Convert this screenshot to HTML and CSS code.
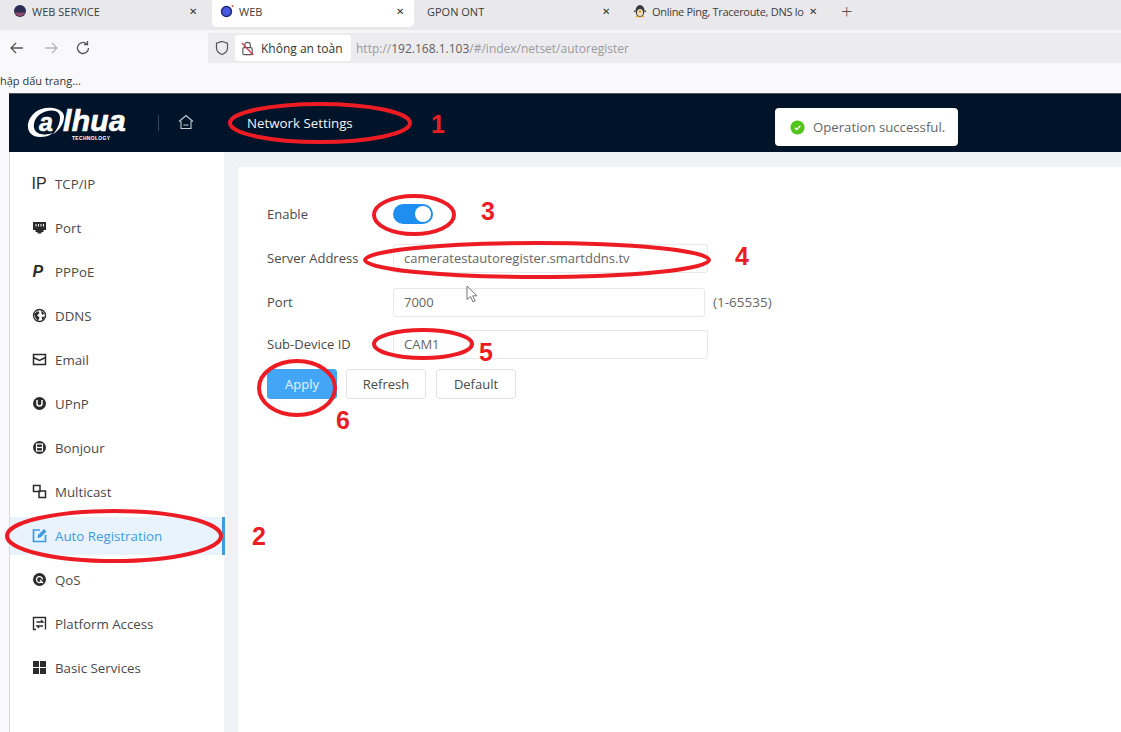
FILE: index.html
```html
<!DOCTYPE html>
<html lang="en">
<head>
    <meta charset="UTF-8">
    <title>WEB</title>
    <link rel="stylesheet" href="styles.css">
</head>
<body>

<!-- Browser tabs -->
<div class="tabs">
    <div class="tab tab-first">
        <svg class="favicon" viewBox="0 0 14 14"><circle cx="7" cy="7" r="6" fill="#2b2d52"/><path d="M1.5 8.5a6 6 0 0 0 11 0z" fill="#8a4a6a"/></svg>
        <span class="tab-title">WEB SERVICE</span>
        <span class="tab-close">✕</span>
    </div>
    <div class="tab tab-active">
        <svg class="favicon" viewBox="0 0 14 14"><circle cx="6.5" cy="7.500" r="5" fill="#4a58e0" stroke="#1f2a70" stroke-width="1.400"/><circle cx="12.500" cy="2" r="1" fill="#e0503a"/></svg>
        <span class="tab-title">WEB</span>
        <span class="tab-close">✕</span>
    </div>
    <div class="tab tab-third">
        <span class="tab-title">GPON ONT</span>
        <span class="tab-close">✕</span>
    </div>
    <div class="tab tab-fourth">
        <svg class="favicon" viewBox="0 0 14 14"><ellipse cx="7" cy="7" rx="4.500" ry="6" fill="#3a3a3a"/><ellipse cx="7" cy="8.500" rx="3" ry="3.500" fill="#f3e6c8"/><circle cx="7" cy="7.500" r="1.200" fill="#d98a1c"/><path d="M3 12.500h3M8 12.500h3" stroke="#e8a020" stroke-width="1.500"/><path d="M2.500 6L1 8M11.500 6L13 8" stroke="#3a3a3a"/></svg>
        <span class="tab-title">Online Ping, Traceroute, DNS lo</span>
        <span class="tab-close">✕</span>
    </div>
    <span class="tab-new">+</span>
</div>

<!-- Address bar -->
<div class="toolbar">
    <svg class="nav-icon" viewBox="0 0 16 16"><path d="M14 8H2.500M7 3L2 8l5 5" fill="none" stroke="#555" stroke-width="1.300"/></svg>
    <svg class="nav-icon nav-off" viewBox="0 0 16 16"><path d="M2 8h11.500M9 3l5 5-5 5" fill="none" stroke="#b5b5b8" stroke-width="1.300"/></svg>
    <svg class="nav-icon" viewBox="0 0 16 16"><path d="M13.500 8a5.500 5.500 0 1 1-1.700-4M12.500 1v3.500H9" fill="none" stroke="#555" stroke-width="1.300"/></svg>
    <div class="urlbar">
        <svg class="shield" viewBox="0 0 16 16"><path d="M8 1.500l5.500 1.800V8c0 3.200-2.500 5.400-5.500 6.500C5 13.400 2.500 11.200 2.500 8V3.300z" fill="none" stroke="#555" stroke-width="1.200"/></svg>
        <div class="site-pill">
            <svg class="lock" viewBox="0 0 16 16"><rect x="3" y="7" width="10" height="7.500" rx="1.500" fill="none" stroke="#555" stroke-width="1.200"/><path d="M5 7V4.500a3 3 0 0 1 6 0V7" fill="none" stroke="#555" stroke-width="1.200"/><path d="M2 2l12 13" stroke="#d8344a" stroke-width="1.400"/></svg>
            <span>Không an toàn</span>
        </div>
        <span class="url">http://<b>192.168.1.103</b>/#/index/netset/autoregister</span>
    </div>
</div>

<div class="bookmarks">hập dấu trang...</div>

<!-- Camera web UI -->
<div class="app">
    <header class="app-header">
        <div class="logo">
            <svg class="logo-swoosh" viewBox="0 0 44 32"><path d="M26 1C14-1 3 6 1 17c-1 8 4 13 12 13 5 0 9-1 13-4-4 1.500-8 2-12 1-5-1-8-5-7-10C8 9 16 3.500 25 3.500c5 0 8 3 8 7 0 6-3 12-7 17 7-5 11-11 11-18 0-4-4-7.500-11-8.500z" fill="#fff"/></svg>
            <span class="logo-a">a</span><span class="logo-rest">lhua</span>
            <span class="logo-sub">TECHNOLOGY</span>
        </div>
        <span class="header-divider"></span>
        <svg class="home-icon" viewBox="0 0 16 16"><path d="M1 7.500L8 1.500l7 6M3 7v7.500h10V7M5.500 11h5" fill="none" stroke="#c8ced6" stroke-width="1.100"/></svg>
        <span class="header-title">Network Settings</span>
    </header>

    <div class="layout">
        <nav class="sidebar">
            <a class="nav-item">
                <svg class="nav-glyph" viewBox="0 0 15 15"><text x="-0.500" y="13" class="glyph-ip">IP</text></svg>
                TCP/IP
            </a>
            <a class="nav-item">
                <svg class="nav-glyph" viewBox="0 0 15 15"><path d="M1 2h13v8h-2.500v2h-2v1.500h-4V12h-2v-2H1z" fill="#2b2b2b"/><path d="M4 4v2.500M6.500 4v2.500M9 4v2.500M11.500 4v2.500" stroke="#fff"/></svg>
                Port
            </a>
            <a class="nav-item">
                <svg class="nav-glyph" viewBox="0 0 15 15"><text x="0.500" y="13" class="glyph-p">P</text></svg>
                PPPoE
            </a>
            <a class="nav-item">
                <svg class="nav-glyph" viewBox="0 0 15 15"><circle cx="7.500" cy="7.500" r="6" fill="none" stroke="#2b2b2b" stroke-width="1.300"/><path d="M2 6l4-3 1.500 2L5 7.500l2.500 2L6 13 3.500 10zM9 2.500l3.500 3L10 7zM9.500 9l3.500-.5-2.500 4z" fill="#2b2b2b"/></svg>
                DDNS
            </a>
            <a class="nav-item">
                <svg class="nav-glyph" viewBox="0 0 15 15"><path d="M1.500 2.500h12v10h-12zM1.500 5.500l6 3 6-3" fill="none" stroke="#2b2b2b" stroke-width="1.500"/></svg>
                Email
            </a>
            <a class="nav-item">
                <svg class="nav-glyph" viewBox="0 0 15 15"><circle cx="7.500" cy="7.500" r="6.500" fill="#2b2b2b"/><path d="M5 4v3.500a2.500 2.500 0 0 0 5 0V4" fill="none" stroke="#fff" stroke-width="1.500"/></svg>
                UPnP
            </a>
            <a class="nav-item">
                <svg class="nav-glyph" viewBox="0 0 15 15"><circle cx="7.500" cy="7.500" r="6.500" fill="#2b2b2b"/><rect x="4.500" y="4" width="6" height="7" fill="none" stroke="#fff" stroke-width="1.200"/><path d="M4.500 7.500h6" stroke="#fff" stroke-width="1.200"/></svg>
                Bonjour
            </a>
            <a class="nav-item">
                <svg class="nav-glyph" viewBox="0 0 15 15"><path d="M1.500 1.500h6.500v6H1.500zM7 7h6.500v6.500H7z" fill="none" stroke="#2b2b2b" stroke-width="1.500"/></svg>
                Multicast
            </a>
            <a class="nav-item nav-active">
                <svg class="nav-glyph" viewBox="0 0 15 15"><path d="M8 2H1.500v11.500h12V7" fill="none" stroke="#3f9be0" stroke-width="1.700"/><path d="M5.500 10l.5-3 6-6 2.500 2.500-6 6z" fill="#3f9be0"/></svg>
                Auto Registration
            </a>
            <a class="nav-item">
                <svg class="nav-glyph" viewBox="0 0 15 15"><circle cx="7.500" cy="7.500" r="6.500" fill="#2b2b2b"/><path d="M10.500 7.500a3 3 0 1 0-1 2.300M8 8l3 3" fill="none" stroke="#fff" stroke-width="1.300"/></svg>
                QoS
            </a>
            <a class="nav-item">
                <svg class="nav-glyph" viewBox="0 0 15 15"><path d="M4 13.500H1.500v-12h12v12" fill="none" stroke="#2b2b2b" stroke-width="1.400"/><path d="M4.500 6h6.500L9 4M11 10H5l2 2" fill="none" stroke="#2b2b2b" stroke-width="1.300"/></svg>
                Platform Access
            </a>
            <a class="nav-item">
                <svg class="nav-glyph" viewBox="0 0 15 15"><path d="M1 1h6v6H1zM8 1h6v6H8zM1 8h6v6H1zM8 8h6v6H8z" fill="#2b2b2b"/></svg>
                Basic Services
            </a>
        </nav>

        <main class="content">
            <div class="form-row">
                <label class="form-label">Enable</label>
                <span class="switch"><span class="switch-knob"></span></span>
            </div>
            <div class="form-row">
                <label class="form-label">Server Address</label>
                <div class="field">cameratestautoregister.smartddns.tv</div>
            </div>
            <div class="form-row">
                <label class="form-label">Port</label>
                <div class="field field-short">7000</div>
                <span class="hint">(1-65535)</span>
            </div>
            <div class="form-row">
                <label class="form-label">Sub-Device ID</label>
                <div class="field">CAM1</div>
            </div>
            <div class="actions">
                <button class="btn btn-primary">Apply</button>
                <button class="btn">Refresh</button>
                <button class="btn">Default</button>
            </div>
        </main>
    </div>
</div>

<!-- Toast on top of the header -->
<div class="toast">
    <svg class="toast-icon" viewBox="0 0 16 16"><circle cx="8" cy="8" r="7.500" fill="#52c41a"/><path d="M5 8.200l2.200 2.100L11 6.200" fill="none" stroke="#fff" stroke-width="1.400"/></svg>
    Operation successful.
</div>

<!-- Mouse pointer -->
<svg class="pointer" viewBox="0 0 12 18"><path d="M1 1v13.500l3.500-3 2.500 5.500 2.200-1-2.500-5.200H11z" fill="#fff" stroke="#777"/></svg>

<!-- Red marks drawn over the screenshot -->
<svg class="marks" viewBox="0 0 1121 732">
    <ellipse cx="320" cy="123" rx="90" ry="19"/>
    <ellipse cx="114" cy="536" rx="107" ry="25"/>
    <ellipse cx="414" cy="215" rx="40" ry="19"/>
    <ellipse cx="537" cy="260" rx="172" ry="17"/>
    <ellipse cx="423" cy="344" rx="49" ry="14"/>
    <ellipse cx="297" cy="388" rx="38" ry="27"/>
    <text x="438" y="133">1</text>
    <text x="259" y="545">2</text>
    <text x="488" y="220">3</text>
    <text x="742" y="265">4</text>
    <text x="486" y="361">5</text>
    <text x="343" y="429">6</text>
</svg>

</body>
</html>
```

FILE: styles.css
```css
/* Basic reset */
* {
    box-sizing: border-box;
    margin: 0;
    padding: 0;
}

:root {
    --header-color: #001429;
    --text-color: #4a4a4a;
    --page-grey: #f1f2f5;
    --blue: #3f9be0;
    --red: #ed1c24;
}

body {
    font-family: 'Open Sans', sans-serif;
    background-color: #f9f9fb;
    color: var(--text-color);
    height: 100vh;
    overflow: hidden;
    position: relative;
}

/* Browser tabs */
.tabs {
    display: flex;
    align-items: flex-start;
    height: 33px;
    background-color: #e9e9eb;
    border-bottom: 3px solid #f6f6f8;
    font-size: 11px;
    color: #3c3c3c;
}

.tab {
    display: flex;
    align-items: center;
    height: 22px;
}

.tab-first {
    width: 212px;
    padding: 0 11px 0 13px;
}

.tab-active {
    width: 202px;
    height: 27px;
    padding: 0 6px 5px 8px;
    background-color: #fff;
    border-radius: 0 0 5px 5px;
}

.tab-third {
    width: 212px;
    padding: 0 12px 0 13px;
}

.tab-fourth {
    width: 195px;
    padding: 0 0 0 7px;
}

.favicon {
    width: 14px;
    height: 14px;
    margin-right: 5px;
    flex-shrink: 0;
}

.tab-title {
    flex: 1;
    white-space: nowrap;
    overflow: hidden;
}

.tab-close {
    font-size: 10px;
    color: #333;
    width: 16px;
    text-align: center;
}

.tab-fourth .tab-title {
    letter-spacing: -0.3px;
}

.tab-new {
    font-size: 20px;
    line-height: 24px;
    font-weight: 300;
    color: #555;
    margin-left: 20px;
}

/* Address bar */
.toolbar {
    display: flex;
    align-items: center;
    height: 30px;
    padding-left: 9px;
}

.nav-icon {
    width: 16px;
    height: 16px;
    margin-right: 18px;
}

.nav-off {
    margin-right: 16px;
}

.urlbar {
    display: flex;
    align-items: center;
    flex: 1;
    height: 30px;
    margin-left: 99px;
    padding-left: 6px;
    background-color: #ececee;
    font-size: 12px;
}

.shield {
    width: 16px;
    height: 16px;
    margin-right: 5px;
}

.site-pill {
    display: flex;
    align-items: center;
    height: 26px;
    width: 116px;
    padding-left: 5px;
    background-color: #fff;
    border-radius: 3px;
    color: #333;
    white-space: nowrap;
}

.lock {
    width: 15px;
    height: 15px;
    margin-right: 6px;
}

.url {
    margin-left: 5px;
    color: #9a9a9e;
    white-space: nowrap;
}

.url b {
    font-weight: 400;
    color: #5f5f63;
}

.bookmarks {
    height: 30px;
    line-height: 35px;
    font-size: 11px;
    color: #333;
    white-space: nowrap;
}

/* Camera web UI */
.app {
    margin-left: 9px;
    border-left: 1px solid #d8dade;
    height: 640px;
}

.app-header {
    display: flex;
    align-items: center;
    height: 59px;
    margin-left: -1px;
    padding-left: 18px;
    background-color: var(--header-color);
    border-top: 1px solid #555;
}

.logo {
    position: relative;
    width: 112px;
    height: 40px;
    color: #fff;
    font-family: 'Liberation Sans', sans-serif;
    font-style: italic;
    font-weight: 700;
}

.logo-swoosh {
    position: absolute;
    left: 0;
    top: 4px;
    width: 44px;
    height: 32px;
}

.logo-a {
    position: absolute;
    left: 12px;
    top: 5px;
    font-size: 25px;
    -webkit-text-stroke: 0.5px #fff;
}

.logo-rest {
    position: absolute;
    left: 36px;
    top: 5px;
    font-size: 30px;
    line-height: 26px;
    letter-spacing: 0.3px;
    -webkit-text-stroke: 0.7px #fff;
}

.logo-sub {
    position: absolute;
    left: 45px;
    top: 32px;
    font-size: 5px;
    line-height: 6px;
    font-style: normal;
    letter-spacing: 0.3px;
}

.header-divider {
    width: 1px;
    height: 16px;
    margin-left: 19px;
    background-color: #33465a;
}

.home-icon {
    width: 16px;
    height: 16px;
    margin-left: 19px;
    margin-bottom: 2px;
}

.header-title {
    margin-left: 53px;
    font-size: 13.300px;
    color: #f2f4f6;
}

.layout {
    display: flex;
    height: 580px;
    background-color: var(--page-grey);
}

.sidebar {
    width: 214px;
    padding-top: 13px;
    background-color: #fff;
    flex-shrink: 0;
}

.nav-item {
    display: flex;
    align-items: center;
    height: 38px;
    margin-bottom: 6px;
    padding-left: 22px;
    font-size: 13.300px;
    white-space: nowrap;
    color: var(--text-color);
}

.nav-glyph {
    width: 15px;
    height: 15px;
    margin-right: 8px;
    margin-bottom: 1px;
    flex-shrink: 0;
}

.glyph-ip {
    font-family: 'Liberation Sans', sans-serif;
    font-size: 16px;
    fill: #2b2b2b;
}

.glyph-p {
    font-family: 'Liberation Sans', sans-serif;
    font-size: 16px;
    font-weight: 700;
    font-style: italic;
    fill: #2b2b2b;
}

.nav-active {
    background-color: #e8f3fe;
    border-right: 3px solid var(--blue);
    margin-right: -1px;
    color: var(--blue);
}

.content {
    flex: 1;
    margin: 15px 0 0 14px;
    padding: 33px 0 0 29px;
    background-color: #fff;
    font-size: 13px;
}

.form-row {
    display: flex;
    align-items: center;
    height: 28px;
    margin-bottom: 16px;
}

.form-row:nth-child(3) {
    margin-bottom: 14px;
}

.form-row:nth-child(4) {
    margin-bottom: 11px;
}

.form-label {
    width: 126px;
    white-space: nowrap;
    flex-shrink: 0;
}

.switch {
    display: block;
    position: relative;
    width: 40px;
    height: 20px;
    border-radius: 10px;
    background-color: #1e8ff0;
}

.switch-knob {
    position: absolute;
    right: 2px;
    top: 2px;
    width: 16px;
    height: 16px;
    border-radius: 50%;
    background-color: #fff;
}

.field {
    width: 315px;
    height: 29px;
    line-height: 27px;
    padding-left: 10px;
    border: 1px solid #e6e8eb;
    border-radius: 3px;
    background-color: #fff;
    color: #666;
    white-space: nowrap;
}

.field-short {
    width: 312px;
}

.hint {
    margin-left: 8px;
    font-size: 13.500px;
    color: #666;
}

.actions {
    display: flex;
    gap: 9px;
}

.btn {
    width: 80px;
    height: 30px;
    margin-right: 1px;
    font-family: inherit;
    font-size: 13px;
    color: #4a4a4a;
    background-color: #fff;
    border: 1px solid #e2e4e8;
    border-radius: 3px;
}

.btn-primary {
    width: 70px;
    margin-right: 0;
    color: #e6f3ff;
    background-color: #42a5f5;
    border-color: #42a5f5;
}

/* Toast */
.toast {
    position: absolute;
    left: 775px;
    top: 108px;
    display: flex;
    align-items: center;
    width: 183px;
    height: 38px;
    padding-left: 15px;
    background-color: #fff;
    border-radius: 4px;
    font-size: 13.200px;
    color: #666;
}

.toast-icon {
    width: 15px;
    height: 15px;
    margin-right: 8px;
}

.pointer {
    position: absolute;
    left: 466px;
    top: 285px;
    width: 12px;
    height: 18px;
}

/* Red marks */
.marks {
    position: absolute;
    left: 0;
    top: 0;
    width: 1121px;
    height: 732px;
    pointer-events: none;
}

.marks ellipse {
    fill: none;
    stroke: var(--red);
    stroke-width: 4;
}

.marks text {
    font-family: 'Liberation Sans', sans-serif;
    font-size: 25px;
    font-weight: 700;
    fill: var(--red);
    text-anchor: middle;
}
```
